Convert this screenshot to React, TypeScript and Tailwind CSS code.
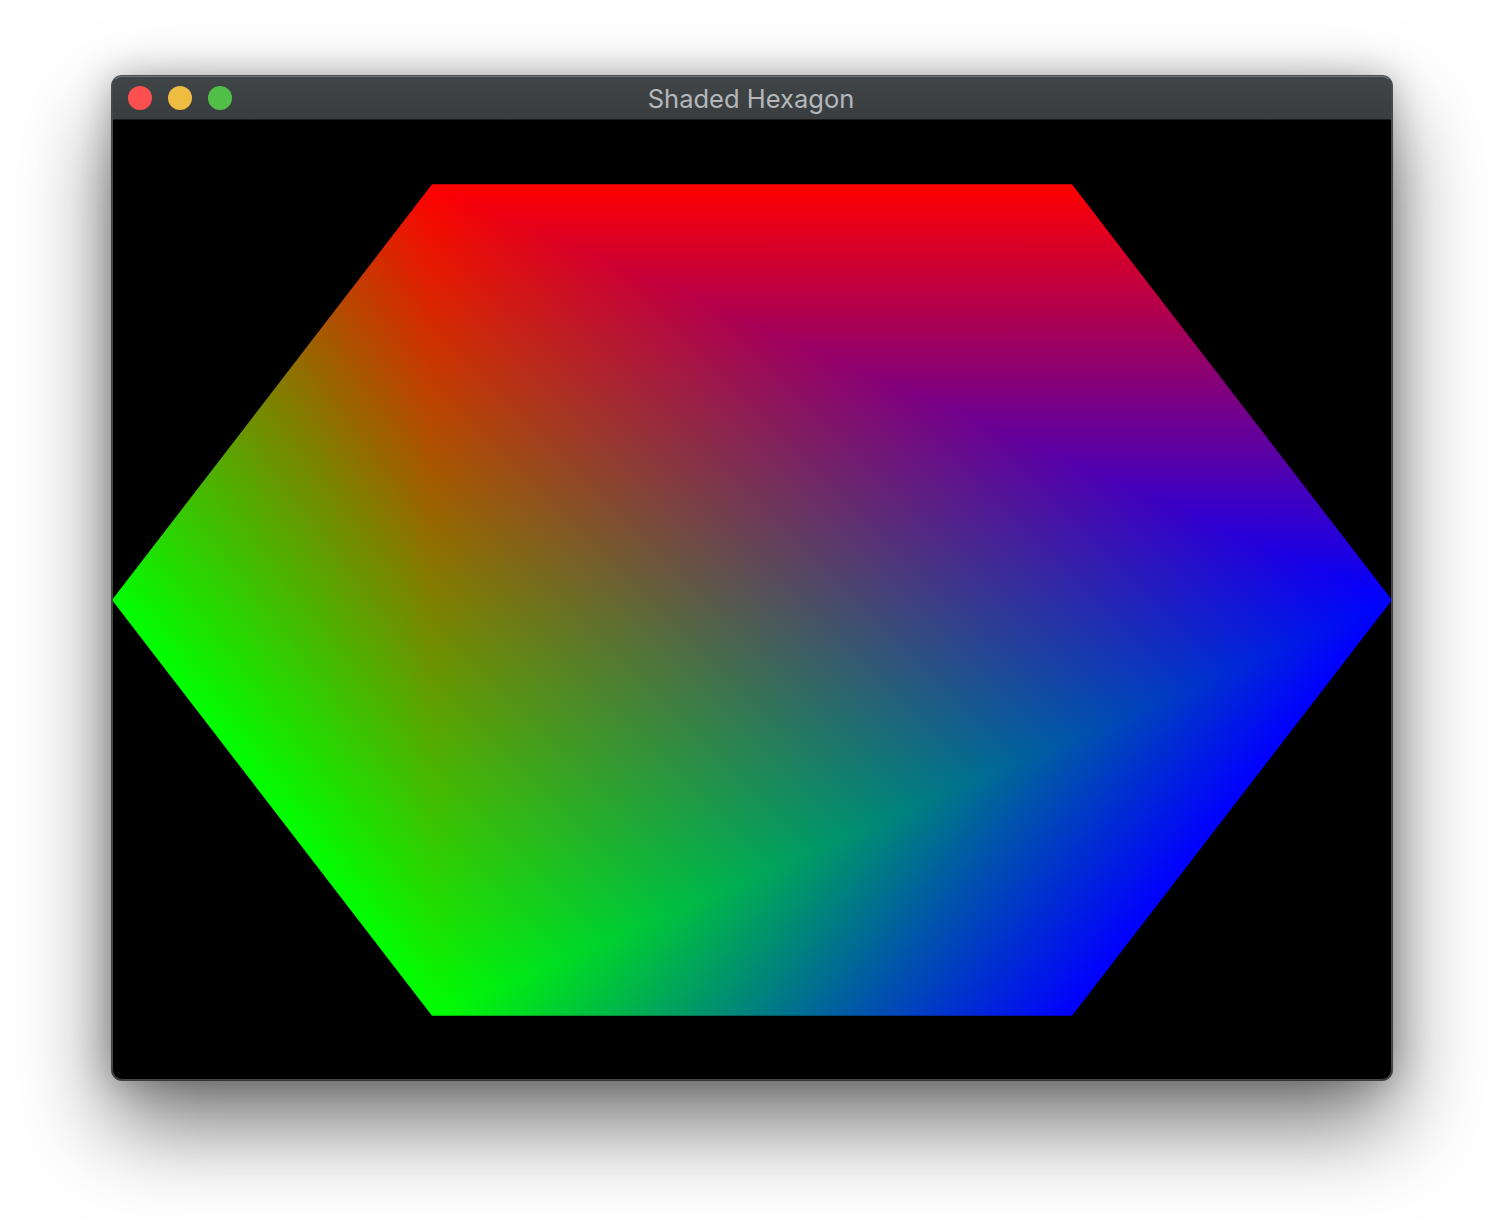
import React from "react";

type Point = [number, number];

const H = 415.7;
const TL: Point = [320, 480 - H];
const TR: Point = [960, 480 - H];
const R: Point = [1280, 480];
const BR: Point = [960, 480 + H];
const BL: Point = [320, 480 + H];
const L: Point = [0, 480];

const toPoints = (pts: Point[]) => pts.map((p) => p.join(",")).join(" ");

// the hexagon is four gouraud triangles, each vertex is pure red, green or blue
type Tri = { verts: [Point, Point, Point]; rgb: [number[], number[], number[]]; shape: Point[] };

const RED = [1, 0, 0];
const GREEN = [0, 1, 0];
const BLUE = [0, 0, 1];

const triangles: Tri[] = [
  { verts: [TL, R, BL], rgb: [RED, BLUE, GREEN], shape: [TL, R, BL] },
  { verts: [TL, TR, R], rgb: [RED, RED, BLUE], shape: [TL, [320, 0], [1280, 0], R] },
  { verts: [R, BR, BL], rgb: [BLUE, BLUE, GREEN], shape: [R, [1280, 960], [320, 960], BL] },
  { verts: [BL, L, TL], rgb: [GREEN, GREEN, RED], shape: [BL, [0, 895.7], [0, 64.3], TL] },
];

// end points of the gradient line that runs from value 0 to value 1 over the triangle
const gradientLine = (verts: Point[], v: number[]) => {
  const [[x0, y0], [x1, y1], [x2, y2]] = verts;
  const det = (x1 - x0) * (y2 - y0) - (x2 - x0) * (y1 - y0);
  const a = ((v[1] - v[0]) * (y2 - y0) - (v[2] - v[0]) * (y1 - y0)) / det;
  const b = ((v[2] - v[0]) * (x1 - x0) - (v[1] - v[0]) * (x2 - x0)) / det;
  const len = a * a + b * b;
  const sx = x0 - (v[0] * a) / len;
  const sy = y0 - (v[0] * b) / len;
  return { x1: sx, y1: sy, x2: sx + a / len, y2: sy + b / len };
};

const CHANNELS = ["#ff0000", "#00ff00", "#0000ff"];

const Hexagon: React.FC = () => (
  <svg viewBox="0 0 1280 960" className="block w-[1280px] h-[960px] isolate">
    <defs>
      <clipPath id="hex">
        <polygon points={toPoints([TL, TR, R, BR, BL, L])} />
      </clipPath>
      {triangles.map((tri, t) =>
        CHANNELS.map((color, c) => {
          const values = tri.rgb.map((v) => v[c]);
          if (values.every((v) => v === 0)) return null;
          return (
            <linearGradient key={c} id={`t${t}c${c}`} gradientUnits="userSpaceOnUse" {...gradientLine(tri.verts, values)}>
              <stop offset="0" stopColor="#000000" />
              <stop offset="1" stopColor={color} />
            </linearGradient>
          );
        })
      )}
    </defs>
    <rect width="1280" height="960" fill="#000000" />
    <g clipPath="url(#hex)">
      <rect width="1280" height="960" fill="#000000" />
      {CHANNELS.map((_, c) => (
        <g key={c} className="mix-blend-screen">
          {triangles.map((tri, t) =>
            tri.rgb.every((v) => v[c] === 0) ? null : (
              <polygon key={t} points={toPoints(tri.shape)} fill={`url(#t${t}c${c})`} shapeRendering="crispEdges" />
            )
          )}
        </g>
      ))}
    </g>
  </svg>
);

const TrafficLights: React.FC = () => (
  <div className="flex gap-4">
    <div className="w-6 h-6 rounded-full bg-[#fc5050]" />
    <div className="w-6 h-6 rounded-full bg-[#eebc40]" />
    <div className="w-6 h-6 rounded-full bg-[#52c048]" />
  </div>
);

export default function App() {
  return (
    <div className="w-[1504px] h-[1228px] bg-white pl-28 pt-[76px] overflow-hidden">
      <div className="relative w-[1280px] h-[1004px] rounded-[10px] shadow-[0_0_0_1px_rgba(30,30,30,0.75),0_44px_90px_rgba(0,0,0,0.55),0_0_36px_rgba(0,0,0,0.28)]">
        <div className="w-full h-full flex flex-col rounded-[10px] overflow-hidden bg-black">
          <div className="relative h-11 shrink-0 flex items-center pl-4 bg-gradient-to-b from-[#404548] to-[#393d40] border-b border-[#1c1e1f]">
            <TrafficLights />
            <div className="absolute inset-0 flex items-center justify-center pr-[2px] pt-[3px] text-[25.5px] text-[#b5b8ba] font-['Inter',sans-serif]">
              Shaded Hexagon
            </div>
          </div>
          <Hexagon />
        </div>
        {/* light rim of the window sits on top of the content */}
        <div className="absolute inset-0 rounded-[10px] pointer-events-none border-[1.5px] border-[#46484a] border-t-[#74777a]" />
      </div>
    </div>
  );
}
